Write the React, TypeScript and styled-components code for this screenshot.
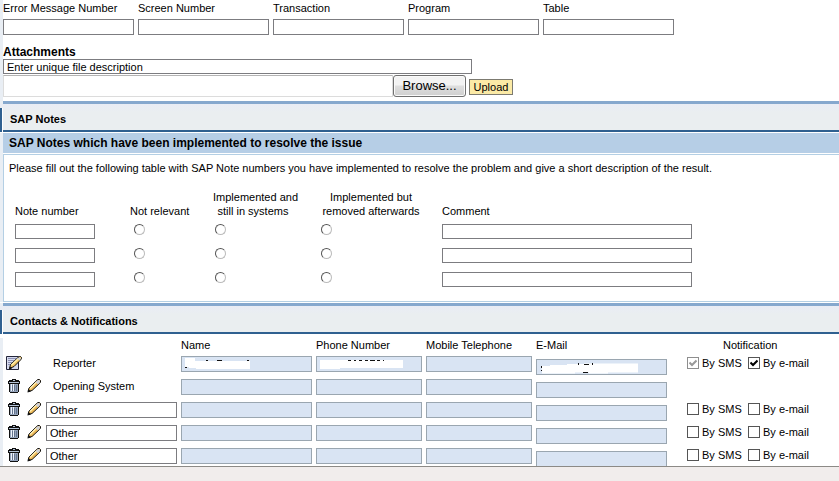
import React from "react";
import styled, { createGlobalStyle } from "styled-components";

const GlobalStyle = createGlobalStyle`
  * { box-sizing: border-box; }
  body { margin: 0; background: #fff; }
  body, input, button, th, td {
    font-family: "Liberation Sans", Arial, sans-serif;
    font-size: 11px;
    color: #000;
  }
`;

const Page = styled.div`
  display: flex;
  flex-direction: column;
  height: 100vh;
`;

const Content = styled.main`
  flex: 1;
  min-height: 0;
  overflow: auto;
  scrollbar-width: none;
  background: #fff;
`;

const StatusBar = styled.footer`
  height: 15px;
  flex: none;
  border-top: 1px solid #8c8a86;
  background: #f1edec;
`;

const Gutter = styled.div`
  border-left: 3px solid #e9eef4;
`;

const TextBox = styled.input<{ $width?: string; $height?: number; $shaded?: boolean }>`
  display: block;
  width: ${(p) => p.$width ?? "100%"};
  height: ${(p) => p.$height ?? 16}px;
  padding: 0 3px;
  border: 1px solid ${(p) => (p.$shaded ? "#9aa6b0" : "#7c7c80")};
  border-radius: 0;
  background: ${(p) => (p.$shaded ? "#d9e4f3" : "#fff")};
  outline: none;
`;

const FieldRow = styled.div`
  display: flex;
  gap: 4px;
  padding-top: 1px;
`;

const Field = styled.label`
  width: 131px;
  line-height: 14px;
  ${TextBox} { margin-top: 4px; }
`;

const Attachments = styled.section`
  padding: 10px 0 4px;
`;

const AttachTitle = styled.label`
  display: block;
  font-size: 12px;
  font-weight: bold;
  line-height: 14px;
`;

const FileRow = styled.div`
  display: flex;
  align-items: flex-end;
  margin-top: 1px;
`;

const FilePath = styled.input`
  width: 390px;
  height: 22px;
  border: 1px solid #dcdcdc;
  border-top-color: #b4b4b4;
  outline: none;
`;

const BrowseButton = styled.button`
  width: 73px;
  height: 22px;
  padding: 0;
  border: 1px solid #707070;
  border-radius: 3px;
  background: linear-gradient(#f3f3f3 45%, #dedede 50%, #cfcfcf);
  box-shadow: inset 0 0 0 1px #fafafa;
  font-size: 13px;
  line-height: 20px;
`;

const UploadButton = styled.button`
  width: 44px;
  height: 16px;
  margin: 0 0 2px 3px;
  padding: 0;
  border: 1px solid #7c7a70;
  background: #fbeaa6;
  line-height: 14px;
`;

const TopRule = styled.div`
  height: 3px;
  background: #86a8ce;
`;

const HeaderBar = styled.div`
  display: flex;
  background: linear-gradient(#e9ecf5, #eaeef0 30%);
`;

const Accent = styled.span`
  width: 3px;
  margin-top: 4px;
  border-left: 2px solid #2f6090;
  border-right: 1px solid #fff;
`;

const HeaderTitle = styled.h2`
  flex: 1;
  margin: 0;
  padding: 4px 0 0 7px;
  border-bottom: 2px solid #2f6090;
  font-size: 11px;
  line-height: 22px;
`;

const SubTitle = styled.h3`
  margin: 1px 0 0;
  padding-left: 6px;
  background: #b6cee6;
  font-size: 12px;
  line-height: 20px;
`;

const NotesBody = styled.div`
  margin-top: 1px;
  margin-bottom: 1px;
  padding: 6px 0 11px 5px;
  border: solid #b4cfe4;
  border-width: 1px 0 1px 1px;
`;

const Intro = styled.p`
  margin: 0;
  line-height: 14px;
`;

const NotesTable = styled.table`
  width: 677px;
  margin: 15px 0 0 6px;
  border-collapse: collapse;
  table-layout: fixed;
  th {
    padding: 0;
    font-weight: normal;
    line-height: 14px;
    text-align: left;
    vertical-align: bottom;
  }
  td {
    height: 24px;
    padding: 0 0 3px;
    vertical-align: bottom;
  }
`;

const Col = styled.col<{ $w?: number }>`
  width: ${(p) => (p.$w ? `${p.$w}px` : "auto")};
`;

const CenteredLabel = styled.span<{ $w: number }>`
  display: block;
  width: ${(p) => p.$w}px;
  text-align: center;
  white-space: nowrap;
`;

const Radio = styled.input<{ $indent: number }>`
  appearance: none;
  display: block;
  width: 11px;
  height: 11px;
  margin: 0 0 4px ${(p) => p.$indent}px;
  border: 1px solid;
  border-color: #555 #bbb #bbb #555;
  border-radius: 50%;
  background: #fff;
`;

const ContactsTable = styled.table`
  margin-top: 4px;
  border-collapse: collapse;
  table-layout: fixed;
  width: 836px;
  th {
    height: 15px;
    padding: 0;
    font-weight: normal;
    line-height: 15px;
    text-align: left;
  }
  td {
    height: 23px;
    padding: 3px 4px 0 0;
    vertical-align: top;
  }
`;

const EmailCell = styled.td`
  && { padding-top: 6px; }
`;

const NotifyHead = styled.th`
  && { padding-left: 36px; }
`;

const IconCell = styled.div<{ $wide?: boolean }>`
  display: flex;
  gap: 7px;
  padding-left: ${(p) => (p.$wide ? 3 : 5)}px;
`;

const IconButton = styled.button`
  display: block;
  padding: 0;
  border: 0;
  background: none;
  svg { display: block; }
`;

const RoleText = styled.span`
  display: block;
  padding-left: 7px;
  line-height: 15px;
`;

const Masked = styled.div`
  position: relative;
  svg {
    position: absolute;
    left: 1px;
    top: 1px;
  }
`;

const Checks = styled.div`
  display: flex;
`;

const CheckLabel = styled.label`
  display: flex;
  align-items: center;
  gap: 3px;
  width: 61px;
  height: 14px;
  white-space: nowrap;
`;

const CheckWrap = styled.span`
  position: relative;
  display: block;
  svg {
    position: absolute;
    left: 2px;
    top: 2px;
    visibility: hidden;
  }
  input:checked + svg { visibility: visible; }
`;

const CheckInput = styled.input`
  appearance: none;
  display: block;
  width: 12px;
  height: 12px;
  margin: 0;
  border: 1px solid #555;
  background: #fff;
  &:disabled { border-color: #8e8e8e; }
`;

const EditIcon = () => (
  <svg width="16" height="14" viewBox="0 0 16 14">
    <path d="M.5.5h12v13H.5z" fill="#d5daee" stroke="#23253a" />
    <path d="M2 2.500h8M2 4.500h6M2 6.500h5M2 8.500h3" stroke="#8b90b4" />
    <path d="M3.500 12.500l1-4L12 1.500l1.500-1h1l1 1v1l-1 1.500L8 10.500z" fill="#f2c565" stroke="#111" />
    <path d="M5.500 9l6.500-6" stroke="#fff2b0" strokeWidth="1.500" />
    <path d="M11 2.500l2.500 2 1.500-2-1-1h-1z" fill="#d3d5da" />
    <path d="M3 13.500l1-3 2 2z" fill="#111" />
  </svg>
);

const TrashIcon = () => (
  <svg width="12" height="14" viewBox="0 0 12 14" shapeRendering="crispEdges">
    <path d="M4 0h4v1h3v1h1v3h-1v8h-1v1H2v-1H1V5H0V2h1V1h3z" fill="#111" />
    <path d="M5 1h2v1H5zM1 3h10v1H1z" fill="#b5c4d8" />
    <path d="M2 5h8v8H2z" fill="#93a3bb" />
    <path d="M3 5h1v7H3zM5 5h1v7H5z" fill="#eef3fb" />
    <path d="M4 6h1v6H4zM6 6h1v6H6zM8 6h1v6H8z" fill="#64748e" />
  </svg>
);

const PencilIcon = () => (
  <svg width="14" height="14" viewBox="0 0 14 14">
    <path d="M1 12.500l1-3.500 7.500-7.500 1.500-1h1.500l1 1V3l-1 1.500L5 11.500z" fill="#eeb957" stroke="#111" />
    <path d="M3 9.500L9.500 3" stroke="#fff0b5" strokeWidth="1.500" />
    <path d="M8.500 3l2.500 2.500 2-2.500V2l-1-1h-1z" fill="#d0d2d8" />
    <path d="M.5 13.500l1-3.500 2.500 2.500z" fill="#111" />
  </svg>
);

const NameMask = () => (
  <svg width="80" height="14" viewBox="0 0 80 14">
    <path d="M3 1h10v3h55v8H14v-1H7v-1H3z" fill="#fff" />
    <path d="M3 10.500h2M24 3.500h2M35 3.500h5M65 3.500h2" stroke="#111" />
  </svg>
);

const PhoneMask = () => (
  <svg width="90" height="14" viewBox="0 0 90 14">
    <path d="M3 3h83v8H23v1H3z" fill="#fff" />
    <path d="M31 3.500h3M37 3.500h2M42 3.500h3M48 3.500h3M53 3.500h5M60 3.500h3M66 3.500h1" stroke="#111" />
  </svg>
);

const EmailMask = () => (
  <svg width="110" height="14" viewBox="0 0 110 14">
    <path d="M5 6h8V5h17V4h17v-.500h54v9H71v1H52v-1H38v1H5z" fill="#fff" />
    <path d="M4.500 6v2M4.500 10v1M41.500 3v2M47 4.500h5M55.500 3v2M46 12.500h5" stroke="#111" />
  </svg>
);

const CheckBox = ({ label, checked, disabled }: { label: string; checked?: boolean; disabled?: boolean }) => (
  <CheckLabel>
    <CheckWrap>
      <CheckInput type="checkbox" defaultChecked={checked} disabled={disabled} />
      <svg width="8" height="8" viewBox="0 0 8 8">
        <path d="M.5 3.500L3 6l4.500-4.500" fill="none" stroke={disabled ? "#999" : "#000"} strokeWidth="2" />
      </svg>
    </CheckWrap>
    {label}
  </CheckLabel>
);

const SectionHeader = ({ title }: { title: string }) => (
  <>
    <Gutter><TopRule /></Gutter>
    <HeaderBar>
      <Accent />
      <HeaderTitle>{title}</HeaderTitle>
    </HeaderBar>
  </>
);

const fields = ["Error Message Number", "Screen Number", "Transaction", "Program", "Table"];
const noteChoices = [
  { label: "Not relevant", indent: 4 },
  { label: "Implemented and still in systems", indent: 2 },
  { label: "Implemented but removed afterwards", indent: 0 },
];
const contacts = [
  { role: "Reporter", own: true, notify: true },
  { role: "Opening System" },
  { role: "Other", editable: true, notify: true },
  { role: "Other", editable: true, notify: true },
  { role: "Other", editable: true, notify: true },
];

export default function App() {
  return (
    <Page>
      <GlobalStyle />
      <Content>
        <Gutter>
          <FieldRow>
            {fields.map((f) => (
              <Field key={f}>
                {f}
                <TextBox />
              </Field>
            ))}
          </FieldRow>
          <Attachments>
            <AttachTitle htmlFor="description">Attachments</AttachTitle>
            <TextBox id="description" $width="469px" $height={15} defaultValue="Enter unique file description" />
            <FileRow>
              <FilePath aria-label="File path" readOnly />
              <BrowseButton type="button">Browse...</BrowseButton>
              <UploadButton type="button">Upload</UploadButton>
            </FileRow>
          </Attachments>
        </Gutter>

        <SectionHeader title="SAP Notes" />
        <Gutter>
          <SubTitle>SAP Notes which have been implemented to resolve the issue</SubTitle>
          <NotesBody>
            <Intro>
              Please fill out the following table with SAP Note numbers you have implemented to resolve the problem and
              give a short description of the result.
            </Intro>
            <NotesTable>
              <colgroup>
                <Col $w={115} />
                <Col $w={83} />
                <Col $w={108} />
                <Col $w={121} />
                <Col $w={250} />
              </colgroup>
              <thead>
                <tr>
                  <th>Note number</th>
                  <th>Not relevant</th>
                  <th><CenteredLabel $w={80}>Implemented and<br />still in systems</CenteredLabel></th>
                  <th><CenteredLabel $w={100}>Implemented but<br />removed afterwards</CenteredLabel></th>
                  <th>Comment</th>
                </tr>
              </thead>
              <tbody>
                {[1, 2, 3].map((n) => (
                  <tr key={n}>
                    <td><TextBox aria-label={`Note number ${n}`} $width="80px" $height={15} /></td>
                    {noteChoices.map((c) => (
                      <td key={c.label}>
                        <Radio type="radio" name={`note-${n}`} aria-label={c.label} $indent={c.indent} />
                      </td>
                    ))}
                    <td><TextBox aria-label={`Comment ${n}`} $height={15} /></td>
                  </tr>
                ))}
              </tbody>
            </NotesTable>
          </NotesBody>
        </Gutter>

        <SectionHeader title="Contacts & Notifications" />
        <Gutter>
          <ContactsTable>
            <colgroup>
              <Col $w={43} />
              <Col $w={135} />
              <Col $w={135} />
              <Col $w={110} />
              <Col $w={110} />
              <Col $w={151} />
              <Col />
            </colgroup>
            <thead>
              <tr>
                <th />
                <th />
                <th>Name</th>
                <th>Phone Number</th>
                <th>Mobile Telephone</th>
                <th>E-Mail</th>
                <NotifyHead>Notification</NotifyHead>
              </tr>
            </thead>
            <tbody>
              {contacts.map((c, i) => (
                <tr key={i}>
                  <td>
                    <IconCell $wide={c.own}>
                      {c.own ? (
                        <IconButton type="button" aria-label="Edit reporter"><EditIcon /></IconButton>
                      ) : (
                        <>
                          <IconButton type="button" aria-label="Delete contact"><TrashIcon /></IconButton>
                          <IconButton type="button" aria-label="Edit contact"><PencilIcon /></IconButton>
                        </>
                      )}
                    </IconCell>
                  </td>
                  <td>
                    {c.editable ? <TextBox aria-label="Contact role" defaultValue={c.role} /> : <RoleText>{c.role}</RoleText>}
                  </td>
                  <td><Masked><TextBox aria-label="Name" $shaded readOnly />{c.own && <NameMask />}</Masked></td>
                  <td><Masked><TextBox aria-label="Phone number" $shaded readOnly />{c.own && <PhoneMask />}</Masked></td>
                  <td><TextBox aria-label="Mobile telephone" $shaded readOnly /></td>
                  <EmailCell>
                    <Masked><TextBox aria-label="E-mail" $width="131px" $shaded readOnly />{c.own && <EmailMask />}</Masked>
                  </EmailCell>
                  <td>
                    {c.notify && (
                      <Checks>
                        <CheckBox label="By SMS" checked={c.own} disabled={c.own} />
                        <CheckBox label="By e-mail" checked={c.own} />
                      </Checks>
                    )}
                  </td>
                </tr>
              ))}
            </tbody>
          </ContactsTable>
        </Gutter>
      </Content>
      <StatusBar />
    </Page>
  );
}
